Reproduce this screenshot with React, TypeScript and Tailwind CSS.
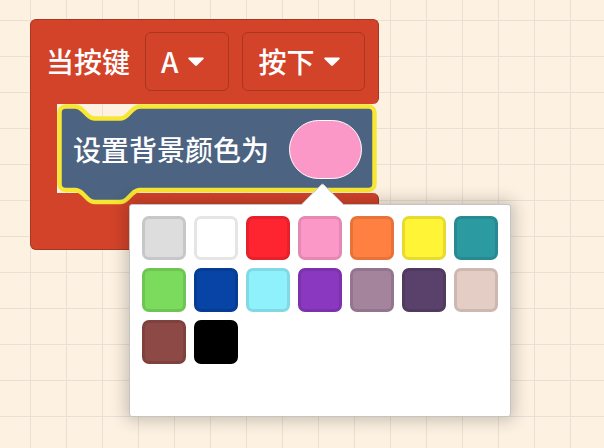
import React from 'react'

type Swatch = { fill: string; edge: string }

const swatches: Swatch[] = [
  { fill: 'bg-[#dddddd]', edge: 'border-[#c7c7c7]' },
  { fill: 'bg-[#ffffff]', edge: 'border-[#e5e5e5]' },
  { fill: 'bg-[#ff2530]', edge: 'border-[#e5212b]' },
  { fill: 'bg-[#fc98c8]', edge: 'border-[#e389b4]' },
  { fill: 'bg-[#ff8041]', edge: 'border-[#e5733a]' },
  { fill: 'bg-[#fff536]', edge: 'border-[#e6dc30]' },
  { fill: 'bg-[#2b9aa1]', edge: 'border-[#268a90]' },
  { fill: 'bg-[#7bdb5c]', edge: 'border-[#6ec553]' },
  { fill: 'bg-[#0843a6]', edge: 'border-[#073c95]' },
  { fill: 'bg-[#8ff1fc]', edge: 'border-[#80d9e3]' },
  { fill: 'bg-[#8b38c0]', edge: 'border-[#7d32ad]' },
  { fill: 'bg-[#a4839d]', edge: 'border-[#93768d]' },
  { fill: 'bg-[#5a416b]', edge: 'border-[#513a60]' },
  { fill: 'bg-[#e4cdc5]', edge: 'border-[#cdb8b1]' },
  { fill: 'bg-[#8c4945]', edge: 'border-[#7e413e]' },
  { fill: 'bg-[#000000]', edge: 'border-[#000000]' },
]

function Caret() {
  return (
    <svg width="18" height="11" viewBox="0 0 18 11" className="shrink-0">
      <path d="M2 1.5 H16 Q17.5 1.5 16.5 3 L10.2 9.3 Q9 10.5 7.8 9.3 L1.5 3 Q0.5 1.5 2 1.5 Z" fill="#fff" />
    </svg>
  )
}

function Dropdown({ label }: { label: string }) {
  return (
    <div className="flex items-center h-[59px] gap-[9px] pl-[15px] pr-[23px] rounded-md border-[1.5px] border-[#a9361f] bg-[#d3432a]">
      <span className="text-[28px] leading-none font-medium text-white">{label}</span>
      <Caret />
    </div>
  )
}

// puzzle-shaped statement block
function StatementShape() {
  return (
    <svg width="320" height="102" viewBox="0 0 320 102" className="absolute left-0 top-0 overflow-visible">
      <path
        d="M2.5 8.5 A6 6 0 0 1 8.5 2.5 H18 C22 2.5 24 4.5 26 6.5 L31 11.5 C33 13.5 35 14.5 38 14.5 H63 C66 14.5 68 13.5 70 11.5 L75 6.5 C77 4.5 79 2.5 83 2.5 H311.5 A6 6 0 0 1 317.5 8.5 V80 A6 6 0 0 1 311.5 86 H83 C79 86 77 88 75 90 L70 95 C68 97 66 98 63 98 H38 C35 98 33 97 31 95 L26 90 C24 88 22 86 18 86 H8.5 A6 6 0 0 1 2.5 80 Z"
        fill="#4c6381"
        stroke="#f7e733"
        strokeWidth="4.5"
        strokeLinejoin="round"
      />
    </svg>
  )
}

export default function App() {
  return (
    <div className="relative w-full h-[448px] overflow-hidden bg-[#fdf2e2] bg-[linear-gradient(to_right,#ebdfd5_1px,transparent_1px),linear-gradient(to_bottom,#ebdfd5_1px,transparent_1px)] bg-[size:36px_36px] bg-[position:30px_20px] font-['Noto_Sans_CJK_SC',sans-serif]">
      {/* event block */}
      <div className="ml-[30px] pt-[19px] w-[349px] flex flex-col">
        <div className="flex items-center h-[85px] pl-[15px] pb-[2px] bg-[#d3432a] border border-b-0 border-[#a9361f] rounded-t-md rounded-br-md">
          <span className="text-[28px] leading-none font-medium text-white">当按键</span>
          <div className="flex gap-[13px] ml-[15px]">
            <Dropdown label="A" />
            <Dropdown label="按下" />
          </div>
        </div>

        <div className="flex h-[89px]">
          <div className="w-[27px] bg-[#d3432a] border-l border-[#a9361f]" />
          <div className="relative z-10 w-[320px] h-[89px]">
            <StatementShape />
            <div className="relative flex items-center justify-between h-[89px] pl-[16px] pr-[15px] pt-[1px]">
              <span className="text-[28px] leading-none font-medium text-white">设置背景颜色为</span>
              <div className="w-[73px] h-[59px] rounded-[30px] bg-[#fc98c8] border-[1.5px] border-white" />
            </div>
          </div>
        </div>

        <div className="h-[57px] bg-[#d3432a] border border-t-0 border-[#a9361f] rounded-b-md rounded-tr-md" />
      </div>

      {/* colour picker popup */}
      <div className="absolute z-20 left-[129px] top-[204px] w-[382px] h-[213px] bg-white border border-[#c4c4c4] rounded-[3px] shadow-[0_0_16px_4px_rgba(0,0,0,0.2)]">
        <div className="absolute left-[177px] -top-[16px] w-[31px] h-[31px] rotate-45 bg-white border-l border-t border-[#c4c4c4] rounded-tl-[3px]" />
        <div className="relative grid grid-cols-7 gap-[8px] pl-[12px] pt-[11px] w-fit">
          {swatches.map((s, i) => (
            <div key={i} className={`w-[44px] h-[44px] rounded-[7px] border-[3px] ${s.fill} ${s.edge}`} />
          ))}
        </div>
      </div>
    </div>
  )
}
